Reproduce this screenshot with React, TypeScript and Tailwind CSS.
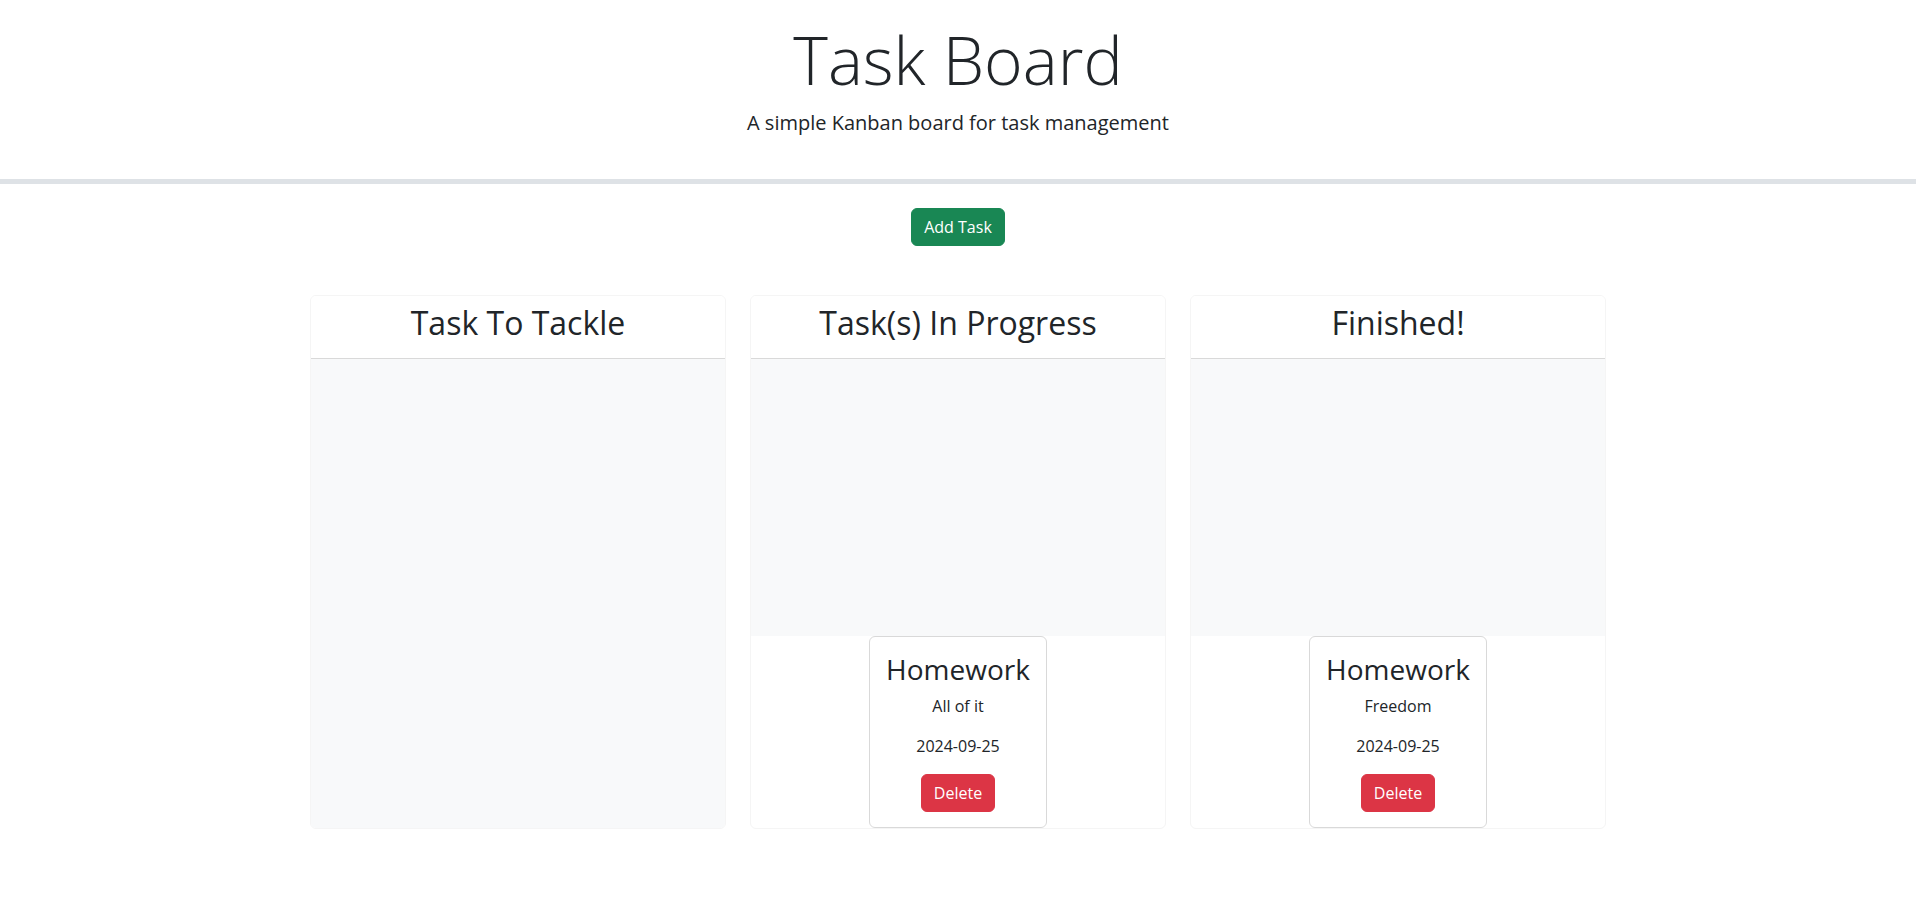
const lanes = [
  { id: 'to-do', title: 'Task To Tackle', tasks: [] as Task[] },
  {
    id: 'in-progress',
    title: 'Task(s) In Progress',
    tasks: [{ id: 1, title: 'Homework', description: 'All of it', due: '2024-09-25' }],
  },
  {
    id: 'done',
    title: 'Finished!',
    tasks: [{ id: 2, title: 'Homework', description: 'Freedom', due: '2024-09-25' }],
  },
];

type Task = { id: number; title: string; description: string; due: string };

const TaskCard = ({ task }: { task: Task }) => (
  <div className="w-fit rounded-md border border-[#d9d9d9] bg-white px-4 pt-4 pb-[15px] text-center">
    <h3 className="mb-2 text-[28px] leading-[1.2] font-normal">{task.title}</h3>
    <p className="mb-4 text-base leading-normal">{task.description}</p>
    <p className="mb-4 text-base leading-normal">{task.due}</p>
    <button className="rounded-md border border-[#dc3545] bg-[#dc3545] px-3 py-1.5 text-base leading-normal text-white">
      Delete
    </button>
  </div>
);

export default function App() {
  return (
    <div className="min-h-screen bg-white font-['Open_Sans','Liberation_Sans',sans-serif] text-[#212529]">
      <header className="border-b-[5px] border-[#dee2e6] pt-[20px] pb-[41px] text-center">
        <h1 className="mb-[9px] text-[66px] leading-[1.2] font-light">Task Board</h1>
        <p className="text-xl leading-normal font-normal">A simple Kanban board for task management</p>
      </header>

      <main className="mx-auto max-w-[1320px] px-3">
        <div className="mt-6 flex justify-center">
          <button className="rounded-md border border-[#198754] bg-[#198754] px-3 py-1.5 text-base leading-normal text-white">
            Add Task
          </button>
        </div>

        <div className="mt-[49px] grid grid-cols-3 gap-6">
          {lanes.map((lane) => (
            <div
              key={lane.id}
              className="flex flex-col overflow-hidden rounded-md border border-[#f5f5f5] bg-white"
            >
              <div className="border-b border-[#d9d9d9] bg-white px-4 pt-2 pb-[7px]">
                <h2 className="mb-2 text-center text-[32px] leading-[1.2] font-normal">{lane.title}</h2>
              </div>
              <div className="flex flex-1 flex-col">
                <div className="min-h-[277px] flex-1 bg-[#f8f9fa]" />
                {lane.tasks.length > 0 && (
                  <div className="flex flex-col items-center">
                    {lane.tasks.map((task) => (
                      <TaskCard key={task.id} task={task} />
                    ))}
                  </div>
                )}
              </div>
            </div>
          ))}
        </div>
      </main>
    </div>
  );
}
